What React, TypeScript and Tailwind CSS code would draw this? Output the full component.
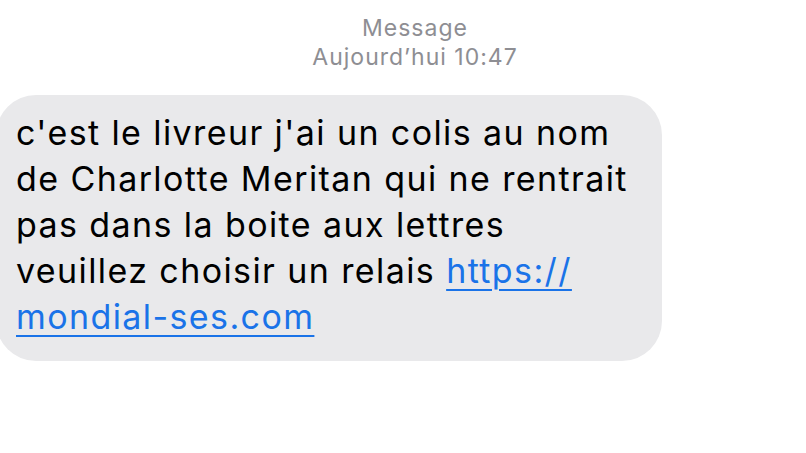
export default function App() {
  return (
    <div className="w-[806px] h-[453px] bg-white overflow-hidden font-['Inter',sans-serif]">
      {/* Header */}
      <div className="pt-[14px] flex flex-col items-center text-[#8e8e93] text-[23px] leading-[29px] tracking-[1px] pl-[24px]">
        <span>Message</span>
        <span>Aujourd’hui 10:47</span>
      </div>

      {/* Bubble */}
      <div className="mt-[23px] ml-[-4px] w-[666px] h-[266px] rounded-[40px] bg-[#e9e9eb] pl-[20px] pt-[15px]">
        <p className="text-[34px] leading-[46px] text-black tracking-[1.4px]">
          c'est le livreur j'ai un colis au nom
          <br />
          de Charlotte Meritan qui ne rentrait
          <br />
          pas dans la boite aux lettres
          <br />
          veuillez choisir un relais{" "}
          <a className="text-[#1a73e8] underline underline-offset-[6px] decoration-[2px]">https://</a>
          <br />
          <a className="text-[#1a73e8] underline underline-offset-[6px] decoration-[2px]">mondial-ses.com</a>
        </p>
      </div>
    </div>
  );
}
